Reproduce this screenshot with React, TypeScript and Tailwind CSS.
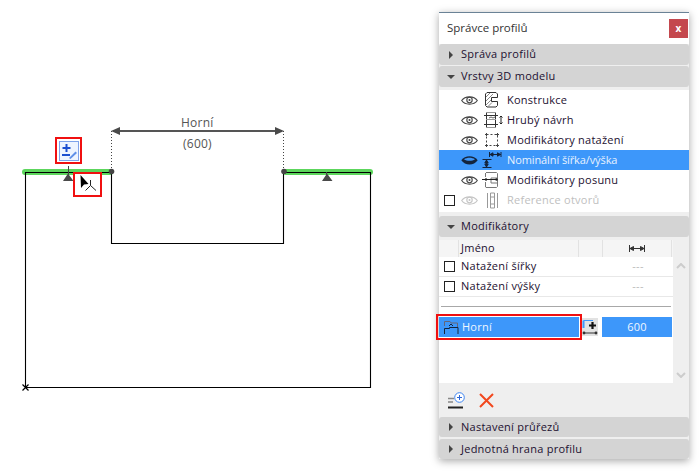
const font = { fontFamily: '"Open Sans","Noto Sans",sans-serif' };

function Eye({ dark, faint }: { dark?: boolean; faint?: boolean }) {
  const c = faint ? "#c4c4c4" : "#444";
  if (dark)
    return (
      <svg width="17" height="11" viewBox="0 0 17 11">
        <path d="M0.3 5.2C4 0 13 0 16.7 5.2C13 10.8 4 10.8 0.3 5.2Z" fill="#14243c" />
        <path d="M3 4.2C6 2.2 11 2.2 14 4.2C11 6.2 6 6.2 3 4.2Z" fill="#3d97fa" />
      </svg>
    );
  return (
    <svg width="17" height="11" viewBox="0 0 17 11" fill="none" stroke={c} strokeWidth="1.1">
      <path d="M0.7 5.5C4 0.7 13 0.7 16.3 5.5C13 10.3 4 10.3 0.7 5.5Z" />
      <circle cx="8.5" cy="5" r="2.7" />
      <circle cx="8.5" cy="5" r="1" fill={c} stroke="none" />
    </svg>
  );
}

function LayerIcon({ kind }: { kind: number }) {
  return (
    <svg className="overflow-visible" width="20" height="18" viewBox="0 0 20 18" fill="none">
      {kind === 0 && (
        <g>
          <path d="M2.5 3L4 1.5H13L14.5 3V6.5H8.5V10.5H14.5V14.5L13 16H4L2.5 14.5Z" stroke="#333" />
          <path d="M3 6L7 2M3 10L10 3M3 14L8 9M5 15.5L9 11.5" stroke="#888" />
        </g>
      )}
      {kind === 1 && (
        <g>
          <path d="M3.5 1V17M12.5 1V17M1 4.5H15M1 13.5H15" stroke="#333" />
          <path d="M3 1.5H13M3 8.5H13M3 16.5H13" stroke="#999" />
          <path d="M6 7L8 6L10 7L12 6" stroke="#666" />
          <path d="M18 5V13M16.5 6.5L18 5L19.5 6.5M16.5 11.5L18 13L19.5 11.5" stroke="#222" />
        </g>
      )}
      {kind === 2 && (
        <g stroke="#444">
          <path d="M3.5 3.5H14.5V14.5H3.5Z" strokeDasharray="2 2" />
          <path d="M2 3.5H5M3.5 2V5M13 3.5H16M14.5 2V5M2 14.5H5M3.5 13V16M13 14.5H16M14.5 13V16" />
        </g>
      )}
      {kind === 3 && (
        <g stroke="#14243c">
          <path d="M6.5 3.5H18M6.5 1V6M18 1V6" />
          <path d="M7 3.5L10 1.8V5.2ZM17.5 3.5L14.5 1.8V5.2Z" fill="#14243c" />
          <path d="M-0.5 8.5H8.5M-0.5 16.5H8.5M3.5 9V16" />
          <path d="M3.5 9L1.8 12H5.2ZM3.5 16L1.8 13H5.2Z" fill="#14243c" />
        </g>
      )}
      {kind === 4 && (
        <g>
          <path d="M3 1.5H13.5L14.5 2.5V15.5L13.5 16.5H3L2.5 16V11M2.5 6V2ZM14 7H8V12H14" stroke="#777" />
          <path d="M-1 8.5H14" stroke="#222" />
          <circle cx="3" cy="8.5" r="1.2" fill="#222" />
          <circle cx="13.5" cy="8.5" r="1.2" fill="#222" />
        </g>
      )}
      {kind === 5 && (
        <path d="M4.5 2V17M14.5 2V17M7.5 2V17M11.5 2V17M7.5 2H11.5M7.5 17H11.5M8 6H11M8 13H11" stroke="#999" />
      )}
    </svg>
  );
}

function Section({ open, label, bottom }: { open?: boolean; label: string; bottom?: boolean }) {
  return (
    <div className={`flex items-center rounded-[3px] bg-[#d4d4d4] text-[#1c1030] ${bottom ? "h-[20px]" : "h-[21px]"}`}>
      <div className="flex w-[22px] justify-center pl-[1px]">
        {open ? (
          <div className="h-0 w-0 border-x-[4px] border-t-[4px] border-x-transparent border-t-[#444]" />
        ) : (
          <div className="h-0 w-0 border-y-[4px] border-l-[4px] border-y-transparent border-l-[#444]" />
        )}
      </div>
      <span>{label}</span>
    </div>
  );
}

function LayerRow({ label, kind, active, faint }: { label: string; kind: number; active?: boolean; faint?: boolean }) {
  return (
    <div className={`flex h-[20px] items-center ${active ? "bg-[#3d97fa] tracking-[-0.1px] text-[#e8f2ff]" : faint ? "text-[#c0c0c0]" : "text-[#1c1030]"}`}>
      <div className="flex w-[22px] pl-[5px]">
        {faint && <div className="h-[11px] w-[11px] border border-[#222] bg-white" />}
      </div>
      <div className="flex w-[17px] justify-center"><Eye dark={active} faint={faint} /></div>
      <div className="ml-[5px] flex w-[20px] justify-center"><LayerIcon kind={kind} /></div>
      <span className="ml-[4px]">{label}</span>
    </div>
  );
}

function ModRow({ label }: { label: string }) {
  return (
    <div className="flex h-[20px] items-center border-b border-[#e8e8e8] text-[#1c1030]">
      <div className="flex w-[22px] pl-[5px]">
        <div className="h-[11px] w-[11px] border border-[#222] bg-white" />
      </div>
      <span className="w-[142px]">{label}</span>
      <span className="w-[70px] text-center text-[#bbb]">---</span>
    </div>
  );
}

function Drawing() {
  return (
    <svg className="absolute left-0 top-0" width="439" height="472" viewBox="0 0 439 472" fill="none">
      <path d="M25 172H110" stroke="#5cd65c" strokeWidth="6" strokeLinecap="round" />
      <path d="M286 172H370" stroke="#5cd65c" strokeWidth="6" strokeLinecap="round" />
      <path d="M25.5 172.5H111.5V243.5H283.5V172.5H370.5V387.5H25.5Z" stroke="#000" strokeWidth="1.1" />
      <path d="M111.5 131V171M283.5 131V171" stroke="#444" strokeDasharray="1 2" />
      <path d="M113 131H282" stroke="#555" strokeWidth="2" />
      <path d="M111 131L120 127V135ZM284 131L275 127V135Z" fill="#4a4a4a" />
      <circle cx="111.5" cy="171.5" r="2.8" fill="#444" />
      <circle cx="284" cy="171.5" r="2.8" fill="#444" />
      <path d="M68.5 166V176M326.5 172V176" stroke="#444" />
      <path d="M68 173.5L73.5 181H63ZM327 173.5L332.5 181H322Z" fill="#4a4a4a" />
      <path d="M22.5 384.5L28.5 390.5M28.5 384.5L22.5 390.5" stroke="#000" strokeWidth="1.2" />
      <rect x="56" y="138" width="25" height="25" fill="#fff" stroke="#f01010" strokeWidth="2" />
      <rect x="59.5" y="141.5" width="19" height="19" fill="#eef4ff" stroke="#7ea2ea" />
      <path d="M66.5 144V152M62.5 148H70.5" stroke="#1c4fd0" strokeWidth="2" />
      <path d="M62 155H70" stroke="#1c4fd0" strokeWidth="2" />
      <path d="M69 158L75.5 151.5L77 153L70.5 159Z" fill="#5f8fe8" />
      <rect x="74" y="173" width="27" height="23" fill="#fff" stroke="#f01010" strokeWidth="2" />
      <path d="M80.5 175L88.5 184L84 184.5L81 188Z" fill="#000" />
      <path d="M90.5 180V185.5L85.5 190.5M90.5 185.5L96 190.5" stroke="#222" />
    </svg>
  );
}

export default function App() {
  return (
    <div className="relative flex h-[472px] w-[699px] overflow-hidden bg-white text-[11px] tracking-[0.25px]" style={font}>
      <div className="relative h-full w-[439px] shrink-0">
        <Drawing />
        <span className="absolute left-[181px] top-[114px] text-[12px] text-[#555]">Horní</span>
        <span className="absolute left-[183px] top-[135px] text-[12px] text-[#555]">(600)</span>
      </div>
      <div className="mt-[12px] flex h-[447px] w-[250px] flex-col border-t border-[#6a8296] bg-[#efefef] shadow-[0_2px_8px_rgba(0,0,0,0.35)]">
        <div className="flex h-[31px] shrink-0 items-center justify-between bg-white pl-[8px] pr-[1px] text-[11.5px] tracking-normal text-[#333]">
          <span className="pb-[2px]">Správce profilů</span>
          <div className="flex h-[19px] w-[19px] items-center justify-center bg-[#c4484e] text-[10px] font-bold text-white">x</div>
        </div>
        <div className="flex flex-col gap-[1px]">
          <Section label="Správa profilů" />
          <Section open label="Vrstvy 3D modelu" />
        </div>
        <div className="mt-[3px] flex h-[122px] flex-col bg-white">
          <LayerRow kind={0} label="Konstrukce" />
          <LayerRow kind={1} label="Hrubý návrh" />
          <LayerRow kind={2} label="Modifikátory natažení" />
          <LayerRow kind={3} label="Nominální šířka/výška" active />
          <LayerRow kind={4} label="Modifikátory posunu" />
          <LayerRow kind={5} label="Reference otvorů" faint />
        </div>
        <div className="mt-[4px]"><Section open label="Modifikátory" /></div>
        <div className="mt-[3px] flex">
          <div className="flex h-[143px] w-[234px] flex-col bg-white">
            <div className="flex h-[17px] shrink-0 items-center bg-[#f5f5f5] text-[#1c1030]">
              <span className="h-full w-[20px] border-r border-[#e2e2e2]" />
              <span className="flex h-full w-[120px] items-center border-r border-[#e2e2e2] pl-[2px]">Jméno</span>
              <span className="h-full w-[24px] border-r border-[#e2e2e2]" />
              <span className="flex h-full w-[69px] items-center justify-center border-r border-[#e2e2e2]">
                <svg width="16" height="7" viewBox="0 0 16 7" fill="none" stroke="#333"><path d="M0.5 0V7M15.5 0V7M1 3.5H15M1 3.5L4.5 1.5V5.5ZM15 3.5L11.5 1.5V5.5Z" fill="#333" /></svg>
              </span>
            </div>
            <ModRow label="Natažení šířky" />
            <ModRow label="Natažení výšky" />
            <div className="mx-[2px] mt-[9px] h-px shrink-0 bg-[#a8a8a8]" />
            <div className="mt-[10px] flex h-[20px] items-center">
              <div className="flex h-[20px] w-[140px] items-center bg-[#3d97fa] text-[#eef6ff] outline-2 outline-offset-1 outline-[#f01010]">
                <svg className="ml-[5px]" width="15" height="15" viewBox="0 0 15 15" fill="none">
                  <path d="M0.5 6V1.5H6L7 3H13.5V8" stroke="#667" />
                  <path d="M0.5 14V8.5H5.5V7.5H14V14" stroke="#14243c" />
                  <path d="M5 6L7 4L9 6" stroke="#14243c" />
                </svg>
                <span className="ml-[3px]">Horní</span>
              </div>
              <div className="ml-[3px] flex h-[18px] w-[16px] shrink-0 items-center justify-center bg-[#e2e2e2]">
                <svg width="16" height="16" viewBox="0 0 16 16" fill="none">
                  <path d="M1.5 1.5H11" stroke="#3d97fa" />
                  <path d="M1.5 1.5V9" stroke="#3d97fa" strokeWidth="2" />
                  <path d="M10.5 3V10M7 6.5H14" stroke="#111" strokeWidth="2.2" />
                  <path d="M2 14H14" stroke="#333" />
                  <circle cx="2" cy="14" r="1.4" fill="#333" />
                  <circle cx="14" cy="14" r="1.4" fill="#333" />
                </svg>
              </div>
              <div className="ml-[4px] flex h-[20px] w-[70px] items-center justify-center bg-[#3d97fa] text-[#eef6ff]">600</div>
            </div>
          </div>
          <div className="flex h-[143px] w-[16px] flex-col items-center justify-between pb-[5px] pt-[23px]">
            <svg width="10" height="6" viewBox="0 0 10 6" fill="none" stroke="#ccc" strokeWidth="2"><path d="M1 5L5 1L9 5" /></svg>
            <svg width="10" height="6" viewBox="0 0 10 6" fill="none" stroke="#ccc" strokeWidth="2"><path d="M1 1L5 5L9 1" /></svg>
          </div>
        </div>
        <div className="flex h-[34px] shrink-0 items-center gap-[14px] pl-[9px]">
          <svg width="17" height="17" viewBox="0 0 17 17" fill="none">
            <path d="M0 6.5H6M0 10H5" stroke="#888" strokeWidth="1.5" />
            <path d="M0 15.5H15" stroke="#222" strokeWidth="2" />
            <circle cx="11.5" cy="5.5" r="4.8" fill="#fff" stroke="#3d84f0" />
            <path d="M11.5 3V8M9 5.5H14" stroke="#2a66d8" />
          </svg>
          <svg width="15" height="15" viewBox="0 0 15 15" fill="none" stroke="#f2481e" strokeWidth="2"><path d="M1 1L14 14M14 1L1 14" /></svg>
        </div>
        <div className="flex flex-col gap-[2px]">
          <Section bottom label="Nastavení průřezů" />
          <Section bottom label="Jednotná hrana profilu" />
        </div>
      </div>
    </div>
  );
}
